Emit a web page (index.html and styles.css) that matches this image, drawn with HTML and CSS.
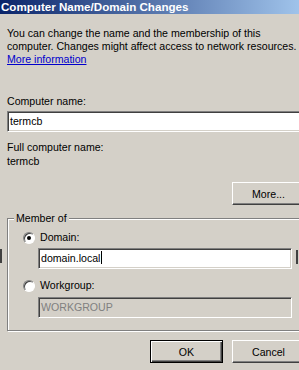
FILE: index.html
```html
<!DOCTYPE html>
<html lang="en">

<head>
    <meta charset="UTF-8">
    <meta name="viewport" content="width=device-width, initial-scale=1.0">
    <title>Computer Name/Domain Changes</title>
    <link rel="stylesheet" href="styles.css">
</head>

<body>
    <div class="dialog">
        <div class="titlebar">Computer Name/Domain Changes</div>
        <div class="content">
            <p class="intro">
                You can change the name and the membership of this<br>
                computer. Changes might affect access to network resources.<br>
                <a href="#">More information</a>
            </p>
            <div class="label first">Computer name:</div>
            <div class="field">termcb</div>
            <div class="label full">Full computer name:</div>
            <div class="value">termcb</div>
            <div class="morerow">
                <button class="btn">More...</button>
            </div>
            <fieldset class="member">
                <legend>Member of</legend>
                <div class="choice"><span class="radio checked"></span>Domain:</div>
                <div class="field sub">domain.local<span class="caret"></span></div>
                <div class="choice second"><span class="radio"></span>Workgroup:</div>
                <div class="field sub disabled">WORKGROUP</div>
            </fieldset>
            <div class="actions">
                <button class="btn default">OK</button>
                <button class="btn">Cancel</button>
            </div>
        </div>
        <span class="mark markleft"></span>
        <span class="mark markright"></span>
    </div>
</body>

</html>
```

FILE: styles.css
```css
body {
    margin: 0;
    background-color: #d4d0c8;
    overflow: hidden;
    font-family: 'Liberation Sans', Arial, sans-serif;
    font-size: 10.6px;
    color: #000;
}

.dialog {
    position: relative;
    width: 312px;
    height: 370px;
    background-color: #d4d0c8;
}

.titlebar {
    height: 14px;
    line-height: 14px;
    padding-left: 1px;
    color: #fff;
    font-weight: bold;
    font-size: 11.6px;
    background: linear-gradient(90deg, #0a246a, #a6caf0);
    white-space: nowrap;
}

.content {
    padding: 0 7px;
}

.intro {
    margin: 13px 0 0;
    line-height: 13px;
    white-space: nowrap;
}

.intro a {
    color: #0000cc;
}

.label,
.value,
.choice {
    line-height: 13px;
    height: 13px;
}

.label.first {
    margin-top: 29px;
}

.label.full {
    margin-top: 9px;
}

.value {
    margin-top: 1px;
}

.field {
    margin-top: 3px;
    height: 19px;
    line-height: 19px;
    padding-left: 2px;
    background-color: #fff;
    border: 1px solid;
    border-color: #808080 #fff #fff #808080;
    box-shadow: inset 1px 1px #404040, inset -1px -1px #d4d0c8;
    white-space: nowrap;
}

.caret {
    display: inline-block;
    width: 1px;
    height: 13px;
    background-color: #000;
    vertical-align: -2px;
    margin-left: 1px;
}

.morerow {
    margin-top: 14px;
    display: flex;
    justify-content: flex-end;
}

.btn {
    width: 73px;
    height: 23px;
    padding: 0;
    font-family: inherit;
    font-size: inherit;
    color: #000;
    background-color: #d4d0c8;
    border: 1px solid;
    border-color: #fff #404040 #404040 #fff;
    box-shadow: inset -1px -1px #808080;
    border-radius: 0;
}

.btn.default {
    border-color: #000;
    box-shadow: inset 1px 1px #fff, inset -1px -1px #404040, inset -2px -2px #808080;
}

.member {
    margin: 7px 0 0;
    padding: 6px 12px 12px 6px;
    border: 1px solid #808080;
    box-shadow: inset 1px 1px #fff, 1px 1px #fff;
    min-width: 0;
}

.member legend {
    padding: 0 2px;
    line-height: 13px;
    background-color: #d4d0c8;
}

.choice {
    display: flex;
    align-items: center;
    gap: 5px;
    margin-left: 9px;
}

.choice.second {
    margin-top: 10px;
}

.radio {
    position: relative;
    width: 10px;
    height: 10px;
    border-radius: 50%;
    background-color: #fff;
    border: 1px solid;
    border-color: #808080 #fff #fff #808080;
    box-shadow: inset 1px 1px #404040;
}

.radio.checked::after {
    content: "";
    position: absolute;
    left: 3px;
    top: 3px;
    width: 4px;
    height: 4px;
    border-radius: 50%;
    background-color: #000;
}

.field.sub {
    margin-left: 24px;
    margin-top: 4px;
}

.choice.second + .field.sub {
    margin-top: 5px;
}

.field.disabled {
    background-color: #d4d0c8;
    color: #808080;
}

.actions {
    margin-top: 9px;
    display: flex;
    justify-content: flex-end;
    gap: 9px;
}

.mark {
    position: absolute;
    width: 2px;
    height: 14px;
    background-color: #404040;
}

.markleft {
    left: 0;
    top: 249px;
}

.markright {
    left: 296px;
    top: 250px;
}
```
